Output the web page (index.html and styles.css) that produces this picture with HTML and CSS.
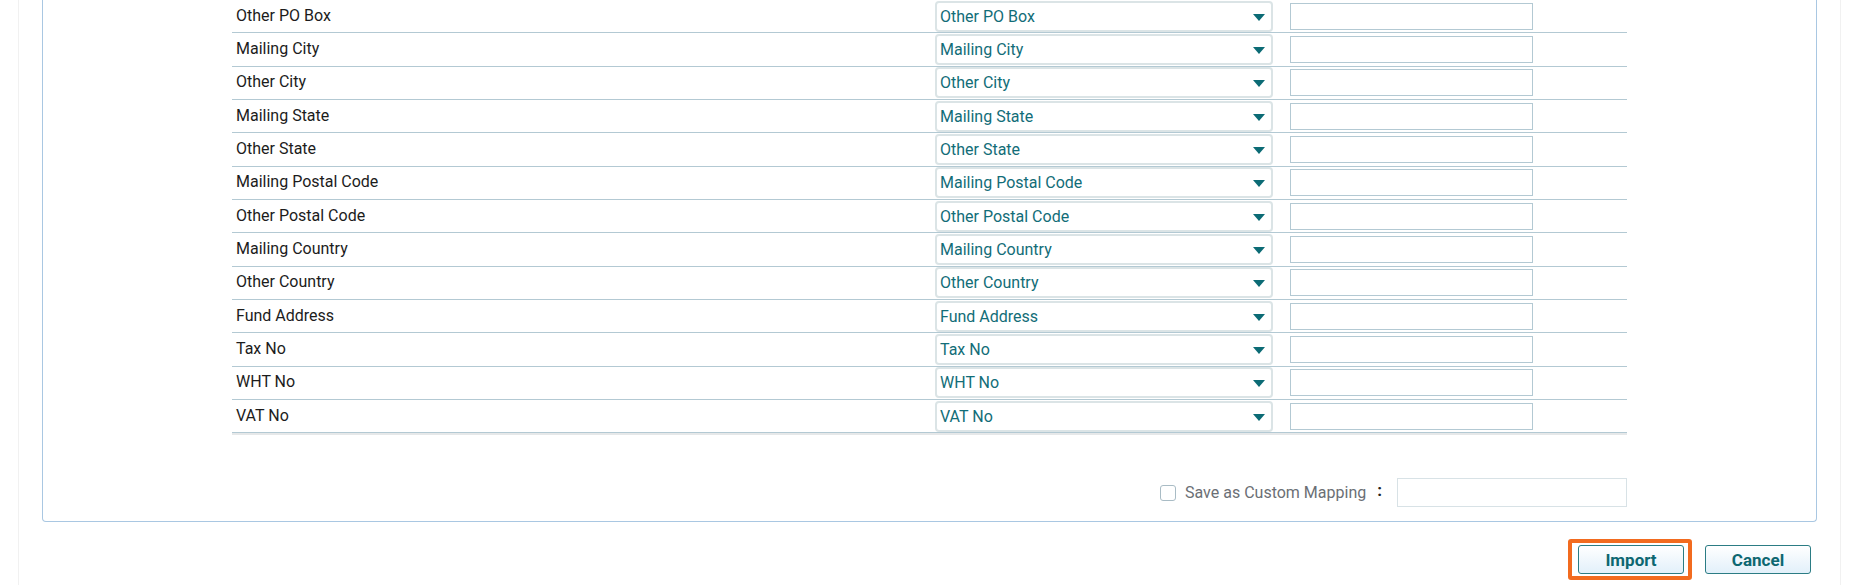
FILE: index.html
```html
<!DOCTYPE html>
<html lang="en">
<head>
<meta charset="utf-8">
<title>Import Mapping</title>
<link rel="stylesheet" href="styles.css">
</head>
<body>
<div class="page">
  <div class="card">
    <div class="mapping">
      <div class="row"><div class="label">Other PO Box</div><div class="cell"><div class="select"><span>Other PO Box</span><svg class="caret" viewBox="0 0 12 7"><path d="M0 0H12L6 7Z"/></svg></div></div><div class="cell"><input class="text-input" type="text"></div></div>
      <div class="row"><div class="label">Mailing City</div><div class="cell"><div class="select"><span>Mailing City</span><svg class="caret" viewBox="0 0 12 7"><path d="M0 0H12L6 7Z"/></svg></div></div><div class="cell"><input class="text-input" type="text"></div></div>
      <div class="row"><div class="label">Other City</div><div class="cell"><div class="select"><span>Other City</span><svg class="caret" viewBox="0 0 12 7"><path d="M0 0H12L6 7Z"/></svg></div></div><div class="cell"><input class="text-input" type="text"></div></div>
      <div class="row"><div class="label">Mailing State</div><div class="cell"><div class="select"><span>Mailing State</span><svg class="caret" viewBox="0 0 12 7"><path d="M0 0H12L6 7Z"/></svg></div></div><div class="cell"><input class="text-input" type="text"></div></div>
      <div class="row"><div class="label">Other State</div><div class="cell"><div class="select"><span>Other State</span><svg class="caret" viewBox="0 0 12 7"><path d="M0 0H12L6 7Z"/></svg></div></div><div class="cell"><input class="text-input" type="text"></div></div>
      <div class="row"><div class="label">Mailing Postal Code</div><div class="cell"><div class="select"><span>Mailing Postal Code</span><svg class="caret" viewBox="0 0 12 7"><path d="M0 0H12L6 7Z"/></svg></div></div><div class="cell"><input class="text-input" type="text"></div></div>
      <div class="row"><div class="label">Other Postal Code</div><div class="cell"><div class="select"><span>Other Postal Code</span><svg class="caret" viewBox="0 0 12 7"><path d="M0 0H12L6 7Z"/></svg></div></div><div class="cell"><input class="text-input" type="text"></div></div>
      <div class="row"><div class="label">Mailing Country</div><div class="cell"><div class="select"><span>Mailing Country</span><svg class="caret" viewBox="0 0 12 7"><path d="M0 0H12L6 7Z"/></svg></div></div><div class="cell"><input class="text-input" type="text"></div></div>
      <div class="row"><div class="label">Other Country</div><div class="cell"><div class="select"><span>Other Country</span><svg class="caret" viewBox="0 0 12 7"><path d="M0 0H12L6 7Z"/></svg></div></div><div class="cell"><input class="text-input" type="text"></div></div>
      <div class="row"><div class="label">Fund Address</div><div class="cell"><div class="select"><span>Fund Address</span><svg class="caret" viewBox="0 0 12 7"><path d="M0 0H12L6 7Z"/></svg></div></div><div class="cell"><input class="text-input" type="text"></div></div>
      <div class="row"><div class="label">Tax No</div><div class="cell"><div class="select"><span>Tax No</span><svg class="caret" viewBox="0 0 12 7"><path d="M0 0H12L6 7Z"/></svg></div></div><div class="cell"><input class="text-input" type="text"></div></div>
      <div class="row"><div class="label">WHT No</div><div class="cell"><div class="select"><span>WHT No</span><svg class="caret" viewBox="0 0 12 7"><path d="M0 0H12L6 7Z"/></svg></div></div><div class="cell"><input class="text-input" type="text"></div></div>
      <div class="row last"><div class="label">VAT No</div><div class="cell"><div class="select"><span>VAT No</span><svg class="caret" viewBox="0 0 12 7"><path d="M0 0H12L6 7Z"/></svg></div></div><div class="cell"><input class="text-input" type="text"></div></div>
    </div>
    <div class="save-row">
      <label class="save-label"><input class="checkbox" type="checkbox"><span>Save as Custom Mapping</span></label>
      <span class="colon">:</span>
      <input class="save-input" type="text">
    </div>
  </div>
  <div class="actions">
    <button class="btn btn-highlight" type="button">Import</button>
    <button class="btn" type="button">Cancel</button>
  </div>
</div>
</body>
</html>
```

FILE: styles.css
```css
* { box-sizing: border-box; }

html, body {
  margin: 0;
  padding: 0;
  background: #ffffff;
  font-family: Roboto, "Liberation Sans", Arial, sans-serif;
  height: 585px;
  overflow: hidden;
}

.page {
  margin: 0 21px 0 18px;
  height: 585px;
  border-left: 1px solid #f1f1f1;
  border-right: 1px solid #f1f1f1;
  padding: 0 0 0 23px;
}

.card {
  width: 1775px;
  border: 1px solid #a9c7e2;
  border-top: 0;
  border-radius: 0 0 4px 4px;
  padding: 0 0 14px 0;
}

.mapping {
  width: 1395px;
  margin: 0 0 0 189px;
  box-shadow: 0 2px 0 #e6e8e9;
}

.row {
  display: grid;
  grid-template-columns: 703px 355px 1fr;
  align-items: center;
  height: 33.333px;
  border-bottom: 1px solid #b3c9d3;
}

.label {
  padding-left: 4px;
  font-size: 16px;
  color: #1c1c1c;
  position: relative;
  top: -1px;
}

.select {
  width: 338px;
  height: 31px;
  border: 2px solid #dbe4e6;
  border-radius: 4px;
  background: #fff;
  display: flex;
  align-items: center;
  justify-content: space-between;
  padding: 0 6px 0 3px;
  font-size: 16px;
  color: #126d78;
}

.caret {
  width: 12px;
  height: 7px;
  fill: #0c6b75;
  margin-top: 2px;
}

.text-input {
  display: block;
  width: 243px;
  height: 27px;
  border: 1px solid #b3c9d3;
  margin: 0;
  padding: 0 4px;
  background: #fff;
  font: 15px Roboto, sans-serif;
}

.save-row {
  width: 1395px;
  margin: 45px 0 0 189px;
  display: flex;
  align-items: center;
  justify-content: flex-end;
}

.save-label {
  display: flex;
  align-items: center;
  gap: 9px;
  font-size: 16px;
  color: #6b6f75;
}

.checkbox {
  appearance: none;
  -webkit-appearance: none;
  margin: 0;
  width: 16px;
  height: 16px;
  border: 1px solid #a9bcc5;
  border-radius: 3px;
  background: #fff;
}

.colon {
  margin: 0 15px 0 11px;
  font-size: 17px;
  font-weight: 700;
  color: #222;
  position: relative;
  top: -3px;
}

.save-input {
  display: block;
  width: 230px;
  height: 29px;
  margin: 0;
  border: 1px solid #d8e2e6;
  background: #fff;
}

.actions {
  display: flex;
  justify-content: flex-end;
  gap: 21px;
  padding: 23px 29px 0 0;
  width: 1798px;
}

.btn {
  width: 106px;
  height: 29px;
  border: 1px solid #2b7c84;
  border-radius: 3px;
  background: linear-gradient(#ffffff, #e2f0fa);
  color: #0d6771;
  font: 700 17px Roboto, sans-serif;
  padding: 0;
  position: relative;
}

.btn-highlight::after {
  content: "";
  position: absolute;
  top: -7px;
  bottom: -7px;
  left: -11px;
  right: -9px;
  border: 4px solid #f26b1f;
  border-radius: 3px;
}
```
